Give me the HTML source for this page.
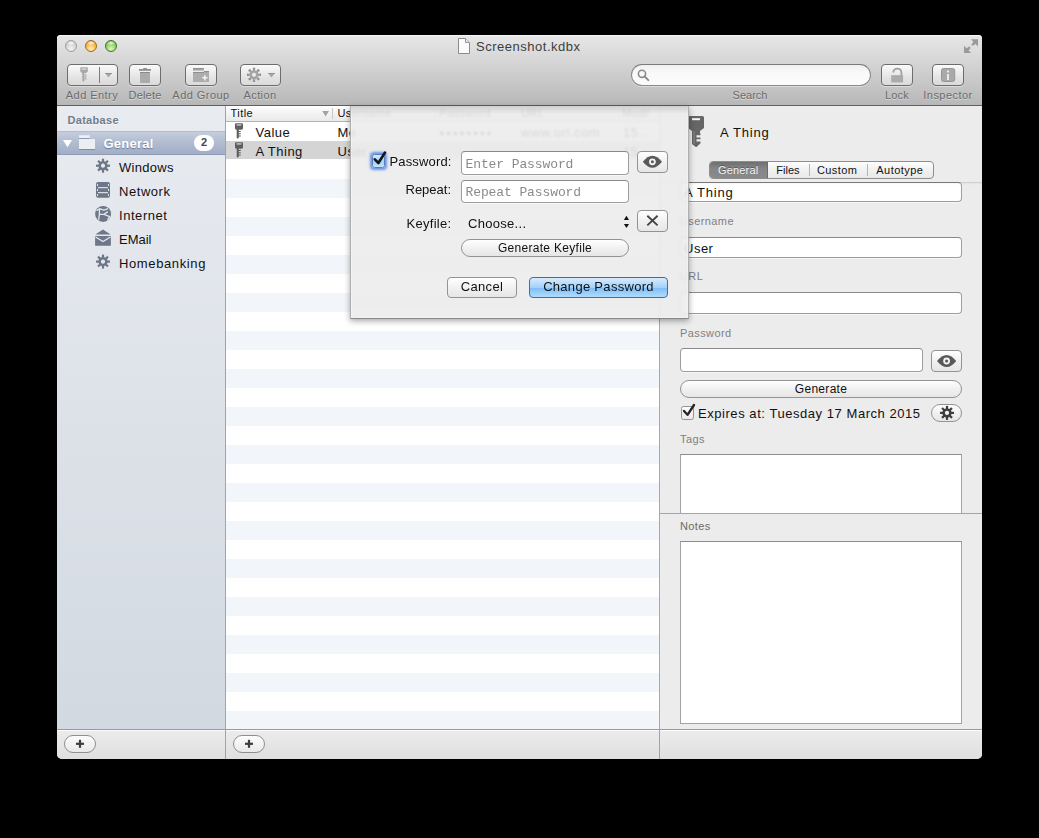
<!DOCTYPE html>
<html><head><meta charset="utf-8">
<style>
*{box-sizing:border-box;margin:0;padding:0}
html,body{width:1039px;height:838px;background:#000;overflow:hidden;font-family:"Liberation Sans",sans-serif;}
.a{position:absolute;white-space:nowrap}
svg{position:absolute;overflow:visible}
#win{position:absolute;left:57px;top:35px;width:925px;height:724px;border-radius:4px 4px 5px 5px;overflow:hidden;background:#ececec}
#tb{position:absolute;left:57px;top:35px;width:925px;height:71px;border-radius:4px 4px 0 0;
 background:linear-gradient(#e7e7e7 0px,#dbdbdb 18px,#c9c9c9 45px,#b8b8b8 69px);border-bottom:1px solid #5f5f5f;box-shadow:inset 0 1px 0 #f6f6f6}
.tl{position:absolute;top:40px;width:12px;height:12px;border-radius:50%}
.tbtn{position:absolute;top:64px;height:22px;border:1px solid #6d6d6d;border-radius:4px;background:linear-gradient(#fafafa,#e4e4e4 60%,#dadada);box-shadow:0 1px 0 rgba(255,255,255,.4)}
.tlab{position:absolute;top:90px;font-size:11px;line-height:11px;color:#6a6a6a;text-shadow:0 1px 0 rgba(255,255,255,.45);white-space:nowrap;text-align:center;letter-spacing:.4px}
#side{position:absolute;left:57px;top:106px;width:168px;height:623px;background:linear-gradient(#e8ebf0,#d2d9e1)}
.sitem{position:absolute;left:119px;font-size:13px;line-height:13px;color:#111;white-space:nowrap;letter-spacing:.55px}
#table{position:absolute;left:226px;top:106px;width:433px;height:623px;background:#fff;overflow:hidden}
.row{position:absolute;left:0;width:433px;height:19px}
.rb{background:#f2f5fa}
.c13{font-size:13px;line-height:13px;letter-spacing:.5px}
.c11{font-size:11px;line-height:11px;letter-spacing:.4px}
.c12{font-size:12px;line-height:12px;letter-spacing:.3px}
#insp{position:absolute;left:659px;top:106px;width:323px;height:623px;background:#ececec;border-left:1px solid #a8a8a8}
#bbar{position:absolute;left:57px;top:729px;width:925px;height:30px;background:linear-gradient(#ececec,#dfdfdf);box-shadow:inset 0 1px 0 #fbfbfb;border-top:1px solid #9a9a9a;border-radius:0 0 5px 5px}
.pbtn{position:absolute;top:735px;width:32px;height:18px;border:1px solid #8f8f8f;border-radius:9px;background:linear-gradient(#fdfdfd,#e9e9e9)}
.lbl{position:absolute;font-size:11px;line-height:11px;color:#808080;white-space:nowrap;letter-spacing:.4px}
.fld{position:absolute;background:#fff;border:1px solid #9d9d9d;border-top-color:#8a8a8a;border-radius:4px;box-shadow:0 1px 0 rgba(255,255,255,.6)}
#sheet{position:absolute;left:350px;top:106px;width:339px;height:213px;background:rgba(236,236,236,.91);border:1px solid rgba(60,60,60,.35);border-bottom-color:rgba(50,50,50,.55);border-top:0;box-shadow:0 2px 6px rgba(0,0,0,.35),inset 1px 0 0 rgba(255,255,255,.3),inset -1px -1px 0 rgba(255,255,255,.3);backdrop-filter:blur(1.2px)}
.btn{position:absolute;border:1px solid #939393;border-radius:4px;background:linear-gradient(#ffffff,#f1f1f1 50%,#e6e6e6);color:#111;text-align:center;white-space:nowrap}
</style></head><body>
<div id="win"></div>
<div id="tb"></div>
<!-- traffic lights -->
<div class="tl" style="left:65px;background:radial-gradient(ellipse 45% 25% at 50% 20%,rgba(255,255,255,.9),rgba(255,255,255,0)),radial-gradient(circle at 50% 75%,#f4f4f4,#d0d0d0 60%,#bababa);border:1px solid #a0a0a0"></div>
<div class="tl" style="left:85px;background:radial-gradient(ellipse 45% 25% at 50% 20%,rgba(255,255,255,.9),rgba(255,255,255,0)),radial-gradient(circle at 50% 80%,#fff3b8,#f7b850 55%,#df8a1a);border:1px solid #a46a17"></div>
<div class="tl" style="left:105px;background:radial-gradient(ellipse 45% 25% at 50% 20%,rgba(255,255,255,.85),rgba(255,255,255,0)),radial-gradient(circle at 50% 80%,#e2f8c0,#92cf66 55%,#5b9f36);border:1px solid #3c7527"></div>
<!-- fullscreen icon -->
<svg style="left:0;top:0" width="1039" height="838">
 <g fill="#9a9a9a">
  <path d="M970.8 39.2 L978 39.2 L978 46.4 Z"/>
  <path d="M964 45.8 L964 53 L971.2 53 Z"/>
 </g>
 <g stroke="#9a9a9a" stroke-width="2.6" stroke-linecap="round">
  <path d="M975 42.3 L972.9 44.4"/><path d="M967 50 L969.1 47.9"/>
 </g>
</svg>
<!-- doc icon -->
<svg style="left:0;top:0" width="1039" height="838">
 <path d="M458.5 38.5 H465.5 L469.5 42.5 V53.5 H458.5 Z" fill="#fbfbfb" stroke="#8c8c8c" stroke-width="1"/>
 <path d="M465.5 38.5 V42.5 H469.5" fill="#e6e6e6" stroke="#9a9a9a" stroke-width="1"/>
</svg>
<div class="a c13" style="left:476px;top:40px;color:#3e3e3e;letter-spacing:.52px">Screenshot.kdbx</div>

<!-- toolbar buttons -->
<div class="tbtn" style="left:67px;width:51px"></div>
<div class="tbtn" style="left:129px;width:32px"></div>
<div class="tbtn" style="left:185px;width:32px"></div>
<div class="tbtn" style="left:240px;width:41px"></div>
<div class="a" style="left:631px;top:64px;width:240px;height:22px;border:1px solid #8a8a8a;border-top-color:#7a7a7a;border-radius:11px;background:linear-gradient(#f0f0f0,#f9f9f9 40%,#fbfbfb);box-shadow:0 1px 0 rgba(255,255,255,.4)"></div>
<div class="tbtn" style="left:881px;width:32px"></div>
<div class="tbtn" style="left:932px;width:32px"></div>
<svg style="left:0;top:0" width="1039" height="838">
 <!-- add entry key -->
 <path d="M80.9 67.2 H87.2 Q87.8 67.2 87.8 67.8 V71.4 L86.2 72.9 H84.3 V81 L83.3 81.8 L82.3 81 V72.9 L81.9 72.9 L80.3 71.4 V67.8 Q80.3 67.2 80.9 67.2 Z" fill="#a8a8a8"/>
 <rect x="81.7" y="68.5" width="4.7" height="1.1" fill="#e6e6e6"/>
 <g fill="#a0a0a0"><rect x="84.6" y="74.3" width="1.8" height="1.2"/><rect x="84.6" y="76.3" width="1.8" height="1.2"/><rect x="84.6" y="78.3" width="1.8" height="1.2"/></g>
 <rect x="99" y="67" width="1" height="16" fill="#7c7c7c"/>
 <path d="M105 73 h7 l-3.5 4.6z" fill="#a6a6a6"/><rect x="105" y="73" width="7" height=".8" fill="#8c8c8c"/>
 <!-- trash -->
 <rect x="139" y="69" width="12" height="1.8" fill="#8f8f8f"/>
 <rect x="143.3" y="68" width="3.6" height="1.5" fill="#8f8f8f"/>
 <path d="M140 72 h10 v10 a1 1 0 0 1 -1 1 h-8 a1 1 0 0 1 -1 -1z" fill="#ababab"/>
 <rect x="140" y="72" width="10" height="1" fill="#8a8a8a"/>
 <!-- add group folder -->
 <rect x="193" y="68" width="10.8" height="2.6" fill="#a6a6a6"/>
 <rect x="193" y="68" width="10.8" height="0.8" fill="#8c8c8c"/>
 <path d="M193 72 h10.8 v-0.9 h5.2 v10.8 h-16z" fill="#adadad"/>
 <rect x="193" y="72" width="10.8" height="0.9" fill="#8c8c8c"/>
 <rect x="203.8" y="71.1" width="5.2" height="0.9" fill="#8c8c8c"/>
 <path d="M203.9 74.8 h2 v2 h2 v2 h-2 v2 h-2 v-2 h-2 v-2 h2z" fill="#f4f4f4" stroke="#9a9a9a" stroke-width=".4"/>
 <!-- action gear -->
 <defs><g id="gear"><path d="M0 -4.6 a4.6 4.6 0 1 1 -0.01 0z M0 -2.1 a2.1 2.1 0 1 0 0.01 0z" fill-rule="evenodd"/><rect x="-1.1" y="-7" width="2.2" height="3.6" transform="rotate(0)"/><rect x="-1.1" y="-7" width="2.2" height="3.6" transform="rotate(45)"/><rect x="-1.1" y="-7" width="2.2" height="3.6" transform="rotate(90)"/><rect x="-1.1" y="-7" width="2.2" height="3.6" transform="rotate(135)"/><rect x="-1.1" y="-7" width="2.2" height="3.6" transform="rotate(180)"/><rect x="-1.1" y="-7" width="2.2" height="3.6" transform="rotate(225)"/><rect x="-1.1" y="-7" width="2.2" height="3.6" transform="rotate(270)"/><rect x="-1.1" y="-7" width="2.2" height="3.6" transform="rotate(315)"/></g></defs>
 <g transform="translate(254 74.8)" fill="#a4a4a4"><use href="#gear"/></g><g transform="translate(254 74.8)" fill="#8a8a8a"><rect x="-1.1" y="-7" width="2.2" height="1.3" transform="rotate(0)"/><rect x="-1.1" y="-7" width="2.2" height="1.3" transform="rotate(45)"/><rect x="-1.1" y="-7" width="2.2" height="1.3" transform="rotate(90)"/><rect x="-1.1" y="-7" width="2.2" height="1.3" transform="rotate(135)"/><rect x="-1.1" y="-7" width="2.2" height="1.3" transform="rotate(180)"/><rect x="-1.1" y="-7" width="2.2" height="1.3" transform="rotate(225)"/><rect x="-1.1" y="-7" width="2.2" height="1.3" transform="rotate(270)"/><rect x="-1.1" y="-7" width="2.2" height="1.3" transform="rotate(315)"/></g>
 <path d="M268 73 h7 l-3.5 4.6z" fill="#a6a6a6"/><rect x="268" y="73" width="7" height=".8" fill="#8c8c8c"/>
 <!-- search magnifier -->
 <circle cx="642" cy="73.8" r="3.6" fill="none" stroke="#8c8c8c" stroke-width="1.6"/>
 <path d="M644.6 76.4 L648.3 80.1" stroke="#8c8c8c" stroke-width="2" stroke-linecap="round"/>
 <!-- lock -->
 <path d="M893.3 72.6 A4.05 4.05 0 0 1 901.4 72.6 V76" fill="none" stroke="#a0a0a0" stroke-width="1.8"/>
 <rect x="891.2" y="75.2" width="11.9" height="7.2" fill="#ababab"/>
 <!-- info -->
 <rect x="941.5" y="68.5" width="13.2" height="13" rx="2" fill="#a9a9a9" stroke="#969696" stroke-width="1"/>
 <circle cx="948" cy="71.6" r="1.1" fill="#f0f0f0"/>
 <rect x="947.1" y="74" width="1.8" height="6" fill="#f0f0f0"/>
</svg>
<div class="tlab" style="left:62px;width:60px;letter-spacing:0.45px">Add Entry</div>
<div class="tlab" style="left:115px;width:60px;letter-spacing:0.2px">Delete</div>
<div class="tlab" style="left:161px;width:80px;letter-spacing:0.45px">Add Group</div>
<div class="tlab" style="left:230px;width:60px;letter-spacing:0.4px">Action</div>
<div class="tlab" style="left:720px;width:60px;letter-spacing:0px">Search</div>
<div class="tlab" style="left:872px;width:50px;letter-spacing:0.25px">Lock</div>
<div class="tlab" style="left:908px;width:80px;letter-spacing:0.45px">Inspector</div>

<!-- sidebar -->
<div id="side"></div>
<div class="a c11" style="left:67.5px;top:114.7px;font-weight:bold;color:#6f7c8d;letter-spacing:.3px;text-shadow:0 1px 0 rgba(255,255,255,.6)">Database</div>
<div class="a" style="left:57px;top:131px;width:168px;height:24px;background:linear-gradient(#c5cedd,#b6c0d4 35%,#a1aec7);border-top:1px solid #b2bccd;border-bottom:1px solid #8e9bb4"></div>
<svg style="left:0;top:0" width="1039" height="838">
 <path d="M63 140 h9 l-4.5 7.3z" fill="#fff"/>
 <rect x="79" y="135.2" width="10.8" height="3" fill="#eceef2"/>
 <rect x="79" y="138.2" width="10.8" height="0.9" fill="#8090a8"/>
 <rect x="79" y="139" width="16" height="10" fill="#eceef2"/>
 <rect x="79" y="149" width="16" height="1" fill="#7b8ba3"/>
</svg>
<div class="a c13" style="left:103.5px;top:137px;font-weight:bold;color:#fff;letter-spacing:.25px;text-shadow:0 1px 1px rgba(40,60,90,.5)">General</div>
<div class="a" style="left:194px;top:134.5px;width:20px;height:16px;border-radius:8px;background:#fff;font-size:11px;font-weight:bold;color:#474747;text-align:center;line-height:15.5px">2</div>
<svg style="left:0;top:0" width="1039" height="838" fill="#6d7787">
 <!-- windows gear -->
 <g transform="translate(103 165.7)"><use href="#gear" transform="scale(1)"/></g>
 <!-- network -->
 <rect x="96" y="182" width="14" height="15.8" rx="2" fill="#6d7787"/>
 <rect x="98" y="187.1" width="10" height="1.1" fill="#e4e8ee"/>
 <rect x="98" y="192.1" width="10" height="1.1" fill="#e4e8ee"/>
 <g fill="#dfe3ea"><rect x="97" y="184" width="1" height="2"/><rect x="108" y="184" width="1" height="2"/><rect x="97" y="189" width="1" height="2"/><rect x="108" y="189" width="1" height="2"/><rect x="97" y="194" width="1" height="2"/><rect x="108" y="194" width="1" height="2"/></g>
 <!-- internet globe -->
 <circle cx="103.1" cy="213.9" r="8" fill="#6d7787"/>
 <g fill="none" stroke="#e3e7ed" stroke-width="1.3" stroke-linejoin="round">
  <path d="M96.6 210.6 L99.6 208.7 L103.8 210.2 L108 208.7"/>
  <path d="M99.6 208.7 L99.3 214.4 L98.7 219.8"/>
  <path d="M99.3 214.4 L104 214.3 L109.7 216.6 L107.6 219.8"/>
  <path d="M104 214.3 L107.8 211.6"/>
 </g>
 <!-- email -->
 <path d="M95.3 234.6 L103 229.6 L110.7 234.6 Z" fill="#6d7787"/>
 <rect x="95.1" y="236" width="15.8" height="9.8" rx=".6" fill="#6d7787"/>
 <path d="M95.6 236.9 L103 241.6 L110.4 236.9" fill="none" stroke="#e3e7ed" stroke-width="1.2"/>
 <!-- homebanking gear -->
 <g transform="translate(103 261.6)"><use href="#gear"/></g>
</svg>
<div class="sitem" style="top:160.6px;letter-spacing:.3px">Windows</div>
<div class="sitem" style="top:184.6px;letter-spacing:.55px">Network</div>
<div class="sitem" style="top:208.6px;letter-spacing:.55px">Internet</div>
<div class="sitem" style="top:232.6px;letter-spacing:0px">EMail</div>
<div class="sitem" style="top:256.6px;letter-spacing:.62px">Homebanking</div>

<!-- table -->
<div id="table">
 <div class="row rb" style="top:73px"></div><div class="row rb" style="top:111px"></div><div class="row rb" style="top:149px"></div><div class="row rb" style="top:187px"></div><div class="row rb" style="top:225px"></div><div class="row rb" style="top:263px"></div><div class="row rb" style="top:301px"></div><div class="row rb" style="top:339px"></div><div class="row rb" style="top:377px"></div><div class="row rb" style="top:415px"></div><div class="row rb" style="top:453px"></div><div class="row rb" style="top:491px"></div><div class="row rb" style="top:529px"></div><div class="row rb" style="top:567px"></div><div class="row rb" style="top:605px"></div>
 <div class="row" style="top:35px;height:18px;background:#d4d4d4"></div>
 <div class="a" style="left:0;top:0;width:433px;height:16px;background:linear-gradient(#ffffff,#f3f3f3 50%,#e9e9e9);border-bottom:1px solid #b4b4b4"></div>
 <div class="a c11" style="left:4.5px;top:2.3px;color:#111;letter-spacing:.45px">Title</div>
 <svg style="left:0;top:0" width="433" height="30"><path d="M96.2 4.9 h6.8 l-3.4 5.6z" fill="#a3a3a3"/></svg>
 <div class="a" style="left:106px;top:2px;width:1px;height:11px;background:#c8c8c8"></div>
 <div class="a c11" style="left:111.5px;top:2.3px;color:#111">Username</div>
 <div class="a" style="left:209px;top:2px;width:1px;height:11px;background:#c8c8c8"></div>
 <div class="a c11" style="left:213.5px;top:2.3px;color:#111">Password</div>
 <div class="a" style="left:291px;top:2px;width:1px;height:11px;background:#c8c8c8"></div>
 <div class="a c11" style="left:295px;top:2.3px;color:#111">URL</div>
 <div class="a" style="left:392px;top:2px;width:1px;height:11px;background:#c8c8c8"></div>
 <div class="a c11" style="left:396px;top:2.3px;color:#111;width:27px;overflow:hidden">Modified</div>
 <svg style="left:0;top:0" width="433" height="60" fill="#5e5e5e">
  <g id="skey"><path d="M10 17.3 H16 Q17 17.3 17 18.3 V22.3 Q17 23.5 15.6 23.8 H12.8 V24.9 H14.8 V26 H12.8 V27.2 H14.8 V28.3 H12.8 V29.5 H14.8 V30.6 H12.8 V31.8 L11.8 32.7 L10.7 31.8 V23.8 H10.4 Q9 23.5 9 22.3 V18.3 Q9 17.3 10 17.3 Z"/><rect x="10.6" y="18.4" width="4.8" height="1.1" fill="#e6e6e6"/></g>
  <use href="#skey" y="19"/>
 </svg>
 <div class="a c13" style="left:29.5px;top:19.7px;color:#111">Value</div>
 <div class="a c13" style="left:111.5px;top:19.7px;color:#111">Me</div>
 <div class="a c13" style="left:213.5px;top:21px;color:#111;letter-spacing:2.2px">••••••••</div>
 <div class="a c13" style="left:295px;top:19.7px;color:#111">www.url.com</div>
 <div class="a c13" style="left:397px;top:19.7px;color:#111">15...</div>
 <div class="a c13" style="left:29.5px;top:38.5px;color:#111">A Thing</div>
 <div class="a c13" style="left:111.5px;top:38.5px;color:#111">User</div>
 <div class="a c13" style="left:397px;top:38.5px;color:#111">15...</div>
</div>
<div class="a" style="left:225px;top:106px;width:1px;height:653px;background:#a3a3a3"></div>

<!-- inspector -->
<div id="insp"></div>
<svg style="left:0;top:0" width="1039" height="838">
 <path d="M689.5 116 H702.5 Q704 116 704 117.5 V128 L700 131 V133.5 H700.5 V135.3 H696.5 V137.4 H700.5 V139.2 H696.5 V141.4 H700.5 V143.2 L696.5 147 H695.8 L692 144 V131 L688 128 V117.5 Q688 116 689.5 116 Z" fill="#666"/>
 <rect x="692" y="118.2" width="8" height="2" fill="#f4f4f4"/><rect x="693.6" y="131" width="1" height="13" fill="#8c8c8c"/>
</svg>
<div class="a c13" style="left:720px;top:126px;color:#111;letter-spacing:.8px">A Thing</div>
<!-- segmented -->
<div class="a" style="left:709px;top:161px;width:225px;height:18px;border:1px solid #8e8e8e;border-radius:4px;background:linear-gradient(#fefefe,#f1f1f1 50%,#e8e8e8);overflow:hidden">
 <div class="a" style="left:0;top:0;width:58px;height:16px;background:linear-gradient(#6f6f6f,#858585 40%,#8a8a8a);border-right:1px solid #6a6a6a"></div>
 <div class="a" style="left:98.5px;top:2px;width:1px;height:12px;background:#b5b5b5"></div>
 <div class="a" style="left:157px;top:2px;width:1px;height:12px;background:#b5b5b5"></div>
 <div class="a c11" style="left:7.9px;top:3px;color:#f4f4f4;letter-spacing:.2px;text-shadow:0 -1px 0 rgba(0,0,0,.35)">General</div>
 <div class="a c11" style="left:66.3px;top:3px;color:#111;letter-spacing:0px">Files</div>
 <div class="a c11" style="left:107px;top:3px;color:#111;letter-spacing:.4px">Custom</div>
 <div class="a c11" style="left:166.3px;top:3px;color:#111;letter-spacing:.45px">Autotype</div>
</div>
<!-- scroll area -->
<div class="a" style="left:660px;top:182px;width:322px;height:331px;overflow:hidden">
 <div class="fld" style="left:20px;top:0px;width:282px;height:20px"></div>
 <div class="a" style="left:0;top:0;width:322px;height:3px;background:linear-gradient(rgba(0,0,0,.2),rgba(0,0,0,.04) 1px,rgba(0,0,0,0))"></div>
 <div class="a c13" style="left:24px;top:3.5px;color:#111;letter-spacing:.8px">A Thing</div>
 <div class="lbl" style="left:20px;top:33.7px">Username</div>
 <div class="fld" style="left:20px;top:54.5px;width:282px;height:21.5px"></div>
 <div class="a c13" style="left:24px;top:59.7px;color:#111;letter-spacing:.5px">User</div>
 <div class="lbl" style="left:20px;top:89.3px">URL</div>
 <div class="fld" style="left:20px;top:110px;width:282px;height:22px"></div>
 <div class="lbl" style="left:20px;top:145.9px">Password</div>
 <div class="fld" style="left:20px;top:166px;width:243px;height:24px"></div>
 <div class="btn" style="left:271px;top:168px;width:31px;height:22px"></div>
 <div class="btn" style="left:20px;top:198px;width:282px;height:18px;border-radius:9px;font-size:12px;line-height:16px;letter-spacing:.3px">Generate</div>
 <div class="a" style="left:20.5px;top:224px;width:13.5px;height:13.5px;border:1px solid #939393;border-radius:2.5px;background:linear-gradient(#ffffff,#f4f4f4 50%,#e9e9e9)"></div>
 <svg style="left:0;top:0" width="322" height="300">
  <path d="M24 229 L27.5 232.8 L34 223" fill="none" stroke="#262626" stroke-width="2.4" stroke-linecap="round" stroke-linejoin="round"/>
 </svg>
 <div class="a c13" style="left:38px;top:224.8px;color:#111;letter-spacing:.55px">Expires at: Tuesday 17 March 2015</div>
 <div class="btn" style="left:271px;top:222px;width:31px;height:18px;border-radius:9px"></div>
 <div class="lbl" style="left:20px;top:251.9px">Tags</div>
 <div class="a" style="left:20px;top:272px;width:282px;height:70px;background:#fff;border:1px solid #a3a3a3;border-top-color:#8d8d8d"></div>
</div>
<div class="a" style="left:660px;top:513px;width:322px;height:1px;background:#a5a5a5"></div>
<div class="lbl" style="left:680px;top:520.6px;color:#6a6a6a">Notes</div>
<div class="a" style="left:680px;top:541px;width:282px;height:183px;background:#fff;border:1px solid #a3a3a3;border-top-color:#8d8d8d"></div>
<svg style="left:0;top:0" width="1039" height="838">
 <!-- inspector eye -->
 <path d="M937 361 Q946.6 349 956.2 361 Q946.6 373 937 361z" fill="#595959"/>
 <circle cx="946.6" cy="361" r="3.4" fill="#f2f2f2"/><circle cx="946.6" cy="361" r="1.5" fill="#595959"/>
 <!-- gear small -->
 <g transform="translate(947 412.9)" fill="#3e3e3e"><use href="#gear"/></g>
</svg>

<!-- bottom bar -->
<div id="bbar"></div>
<div class="a" style="left:225px;top:729px;width:1px;height:30px;background:#a3a3a3"></div>
<div class="a" style="left:659px;top:729px;width:1px;height:30px;background:#a3a3a3"></div>
<div class="pbtn" style="left:64px"></div>
<div class="pbtn" style="left:233px"></div>
<svg style="left:0;top:0" width="1039" height="838" fill="#3e3e3e">
 <rect x="76" y="742.7" width="8" height="2.2"/><rect x="78.9" y="739.8" width="2.2" height="8"/>
 <rect x="245" y="742.7" width="8" height="2.2"/><rect x="247.9" y="739.8" width="2.2" height="8"/>
</svg>

<!-- sheet -->
<div id="sheet"><div class="a" style="left:0;top:0;width:337px;height:8px;background:linear-gradient(rgba(0,0,0,.13),rgba(0,0,0,0))"></div></div>
<div class="a" style="left:371.5px;top:154px;width:13.5px;height:13.5px;border:1px solid #5a7cc0;border-radius:2.5px;background:linear-gradient(#d4ebfc,#a6d3f6 55%,#c4e6fb);box-shadow:0 0 2.5px 1.5px rgba(70,130,225,.8)"></div>
<svg style="left:0;top:0" width="1039" height="838">
 <path d="M374.8 159.3 L378.4 163 L385 152.5" fill="none" stroke="#0d1620" stroke-width="2.6" stroke-linecap="round" stroke-linejoin="round"/>
</svg>
<div class="a c13" style="left:389.5px;top:154.9px;color:#111;letter-spacing:.15px">Password:</div>
<div class="fld" style="left:461px;top:151px;width:168px;height:24px"></div>
<div class="a" style="left:465.5px;top:157.5px;font-family:'Liberation Mono',monospace;font-size:13px;line-height:13px;color:#8a8a8a;letter-spacing:-.1px">Enter Password</div>
<div class="btn" style="left:637px;top:151px;width:31px;height:22px"></div>
<svg style="left:0;top:0" width="1039" height="838">
 <path d="M642.8 161.8 Q652.4 149.8 662 161.8 Q652.4 173.8 642.8 161.8z" fill="#595959"/>
 <circle cx="652.4" cy="161.8" r="3.4" fill="#f2f2f2"/><circle cx="652.4" cy="161.8" r="1.5" fill="#595959"/>
</svg>
<div class="a c13" style="left:405.5px;top:182.6px;color:#111;letter-spacing:0px">Repeat:</div>
<div class="fld" style="left:461px;top:180px;width:168px;height:23px"></div>
<div class="a" style="left:465.5px;top:186px;font-family:'Liberation Mono',monospace;font-size:13px;line-height:13px;color:#8a8a8a;letter-spacing:-.1px">Repeat Password</div>
<div class="a c13" style="left:406.5px;top:216.6px;color:#111;letter-spacing:.29px">Keyfile:</div>
<div class="a c13" style="left:468px;top:216.8px;color:#111;letter-spacing:.3px">Choose...</div>
<svg style="left:0;top:0" width="1039" height="838" fill="#111">
 <path d="M623.9 219.9 h5.1 l-2.55 -4.1z"/><path d="M623.9 224 h5.1 l-2.55 4.1z"/>
</svg>
<div class="btn" style="left:637px;top:210px;width:31px;height:22px"></div>
<svg style="left:0;top:0" width="1039" height="838">
 <path d="M647.3 215.8 L657.6 225.4 M657.6 215.8 L647.3 225.4" stroke="#454545" stroke-width="1.9"/>
</svg>
<div class="btn" style="left:461px;top:239px;width:168px;height:18px;border-radius:9px;font-size:12px;line-height:16px;letter-spacing:.3px">Generate Keyfile</div>
<div class="btn" style="left:447px;top:277px;width:70px;height:21px;font-size:13px;line-height:18px;letter-spacing:.3px">Cancel</div>
<div class="btn" style="left:529px;top:277px;width:139px;height:21px;font-size:13px;line-height:18px;letter-spacing:.3px;border-color:#4a68a0;background:linear-gradient(#d7ecfd,#a3d1f9 50%,#7dbcf6 51%,#b0dcfd)">Change Password</div>
</body></html>
